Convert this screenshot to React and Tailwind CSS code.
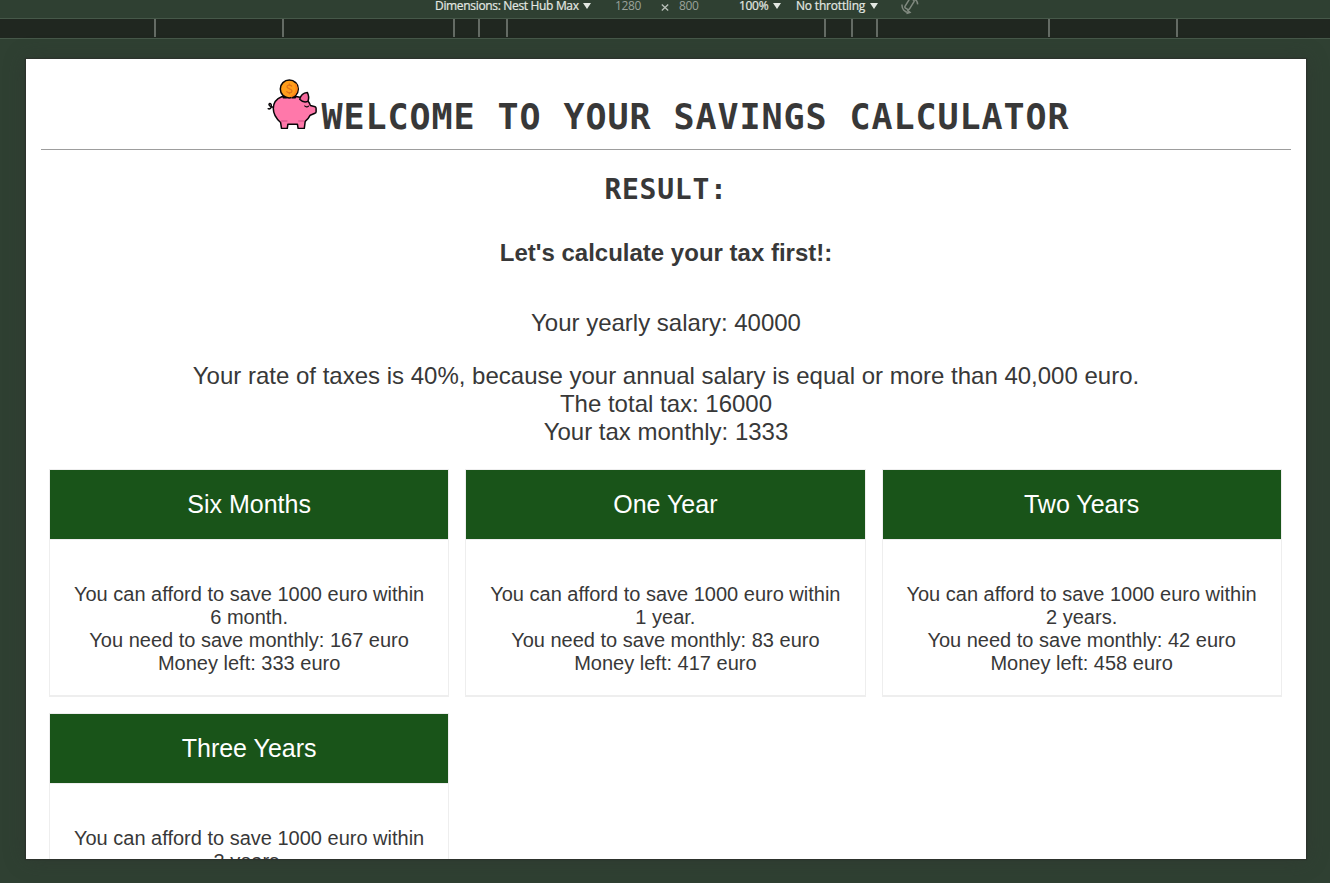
import React from "react";

const TICKS = [
  "ml-[154px]", "ml-[126px]", "ml-[169px]", "ml-[23px]", "ml-[26px]",
  "ml-[316px]", "ml-[25px]", "ml-[23px]", "ml-[170px]", "ml-[126px]",
];

const PLANS = [
  { title: "Six Months", term: "6 month.", monthly: 167, left: 333 },
  { title: "One Year", term: "1 year.", monthly: 83, left: 417 },
  { title: "Two Years", term: "2 years.", monthly: 42, left: 458 },
  { title: "Three Years", term: "3 years.", monthly: 28, left: 472 },
];

function Caret({ className }) {
  return (
    <svg className={`h-[6px] w-[8px] shrink-0 ${className}`} viewBox="0 0 8 6" fill="#e3e8e2">
      <path d="M0 0h8L4 6z" />
    </svg>
  );
}

function Toolbar() {
  return (
    <div className="flex h-[18px] items-start whitespace-nowrap pl-[435px] font-['Open_Sans',sans-serif] text-[12px] leading-[16px] text-[#e3e8e2]">
      <div className="-mt-[2px] w-[148px] tracking-[-0.33px] [-webkit-text-stroke:0.2px]">Dimensions: Nest Hub Max</div>
      <Caret className="mt-[3px]" />
      <div className="-mt-[2px] ml-[24px] w-[46px] tracking-[-0.4px] text-[#9aa19a]">1280</div>
      <svg className="mt-[4px] h-[7px] w-[8px]" viewBox="0 0 8 7" stroke="#b9c0b9" strokeWidth="1.3">
        <path d="M.8.5l6.4 6M7.2.5l-6.4 6" />
      </svg>
      <div className="-mt-[2px] ml-[10px] w-[60px] tracking-[-0.4px] text-[#9aa19a]">800</div>
      <div className="-mt-[2px] w-[34px] tracking-[-0.3px] [-webkit-text-stroke:0.2px]">100%</div>
      <Caret className="mt-[3px]" />
      <div className="-mt-[2px] ml-[15px] w-[74px] tracking-[-0.19px] [-webkit-text-stroke:0.2px]">No throttling</div>
      <Caret className="mt-[3px]" />
      <svg className="ml-[23px] h-[15px] w-[19px]" viewBox="0 0 19 15" fill="none" stroke="#80897f" strokeWidth="1.5">
        <rect x="5.9" y="-1.5" width="5.2" height="11" rx="1.4" transform="rotate(32 8.5 4)" />
        <path d="M1 4.5C.6 8.8 3.8 12.6 8.3 12.5M6.2 9.8l2.8 2.6-3.5 1.2M13.2-1c2.3 1 3.4 2.9 3.5 5.4" />
      </svg>
    </div>
  );
}

function PiggyBank() {
  return (
    <svg className="h-[50px] w-[50px]" viewBox="0 0 50 50" stroke="#090609" strokeWidth="1.5" strokeLinejoin="round" strokeLinecap="round">
      <path d="M6.3 28.2 3.9 27.6C1.8 26.9 1.4 24.8 2.9 24.5c1.9-.1 1.7 3.6.5 4.9-.8.7-1.6.7-2.2.3" fill="none" />
      <path fill="#ff78aa" d="M14.7 17.8 29 17.4l5.2 1.1 6.5 3c1.1 1.5 2.2 3.3 2.7 5.1l4.7 1.2c.7.3 1 .8 1 1.6v3.3c0 .8-.4 1.3-1.2 1.5l-4.7 2c-1.3 2.7-2.9 4.7-5 6.2l-.9 7h-6.2l-.7-4.2H20.9l-.6 4.2h-5.8l-.9-5.9C9.2 39.7 6.3 35 6.3 29.6c0-5.4 3.2-9.8 8.4-11.8z" />
      <path d="M14.6 42h5.2M31.8 42h4.6" stroke="#df5b91" strokeWidth="1.6" />
      <path fill="#f6689c" d="M32.7 20.3c.8-3.6 3.8-6.6 7.6-6.9 1.5 2.9 1.7 6.3.6 9-2.9 1-6.1.2-8.2-2.1z" />
      <path d="M37.8 27c.8 1.2 2.7 1.2 3.7.1" fill="none" strokeWidth="1.2" />
      <circle cx="22.3" cy="10" r="9" fill="#ff9e1b" />
      <path d="M28.7 5.5c2.3 4.6.5 9.8-4 12" fill="none" stroke="#ff8617" strokeWidth="2" />
      <path d="M24.6 7c-1.2-1.4-4.6-1.2-4.6.8 0 2.4 5 1.8 5 4.2 0 2.2-3.8 2.3-5.2.6" fill="none" stroke="#e0741a" strokeWidth="1.3" />
      <path d="M22.3 4.9v1M22.3 13.8v1" stroke="#e0741a" strokeWidth="1.2" />
      <path d="M16.5 18.6h2.6M25.6 18.6h2.6" strokeWidth="1.8" />
    </svg>
  );
}

function PlanCard({ plan }) {
  return (
    <div className="p-2">
      <ul className="border border-[#eee] text-center">
        <li className="border-b border-[#eee] bg-[#195419] p-5 text-[25px] leading-[29px] text-white">{plan.title}</li>
        <li className="border-b border-[#eee] p-5 pt-[43px] text-[20px] leading-[23px]">
          You can afford to save 1000 euro within {plan.term}
          <br />
          You need to save monthly: {plan.monthly} euro
          <br />
          Money left: {plan.left} euro
        </li>
      </ul>
    </div>
  );
}

export default function App() {
  return (
    <div className="flex h-[883px] w-[1330px] flex-col overflow-hidden bg-[#2f4032]">
      <Toolbar />
      <div className="flex h-[21px] shrink-0 border-y border-[#465849] bg-[#202720]">
        {TICKS.map((gap, i) => (
          <div key={i} className={`h-[18px] w-[2px] shrink-0 bg-[#646b64] ${gap}`} />
        ))}
      </div>
      <main className="ml-[26px] mt-5 h-[800px] w-[1280px] shrink-0 overflow-hidden bg-white px-[15px] pt-5 font-['Liberation_Sans',Arial,sans-serif] text-[#383838] shadow-[0_0_1px_1px_rgba(42,36,38,0.4),0_0_20px_rgba(48,48,48,0.4)]">
        <header className="flex h-[71px] justify-center border-b border-[#9d9d9d] pl-[5px]">
          <PiggyBank />
          <h1 className="ml-[4px] mt-[17px] whitespace-nowrap font-['DejaVu_Sans_Mono',monospace] text-[35px] font-bold leading-[42px] tracking-[0.93px]">
            WELCOME TO YOUR SAVINGS CALCULATOR
          </h1>
        </header>
        <h2 className="mt-[20px] text-center font-['DejaVu_Sans_Mono',monospace] text-[28px] font-bold leading-[40px] tracking-[0.74px]">RESULT:</h2>
        <h3 className="mt-[29px] text-center text-[24px] font-bold leading-[28px]">Let's calculate your tax first!:</h3>
        <p className="mt-[42px] text-center text-[24px] leading-[28px]">Your yearly salary: 40000</p>
        <p className="mt-[25px] text-center text-[24px] leading-[28px]">
          Your rate of taxes is 40%, because your annual salary is equal or more than 40,000 euro.
          <br />
          The total tax: 16000
          <br />
          Your tax monthly: 1333
        </p>
        <section className="mt-[15px] grid grid-cols-[repeat(3,416.25px)]">
          {PLANS.map((plan) => (
            <PlanCard key={plan.title} plan={plan} />
          ))}
        </section>
      </main>
    </div>
  );
}
